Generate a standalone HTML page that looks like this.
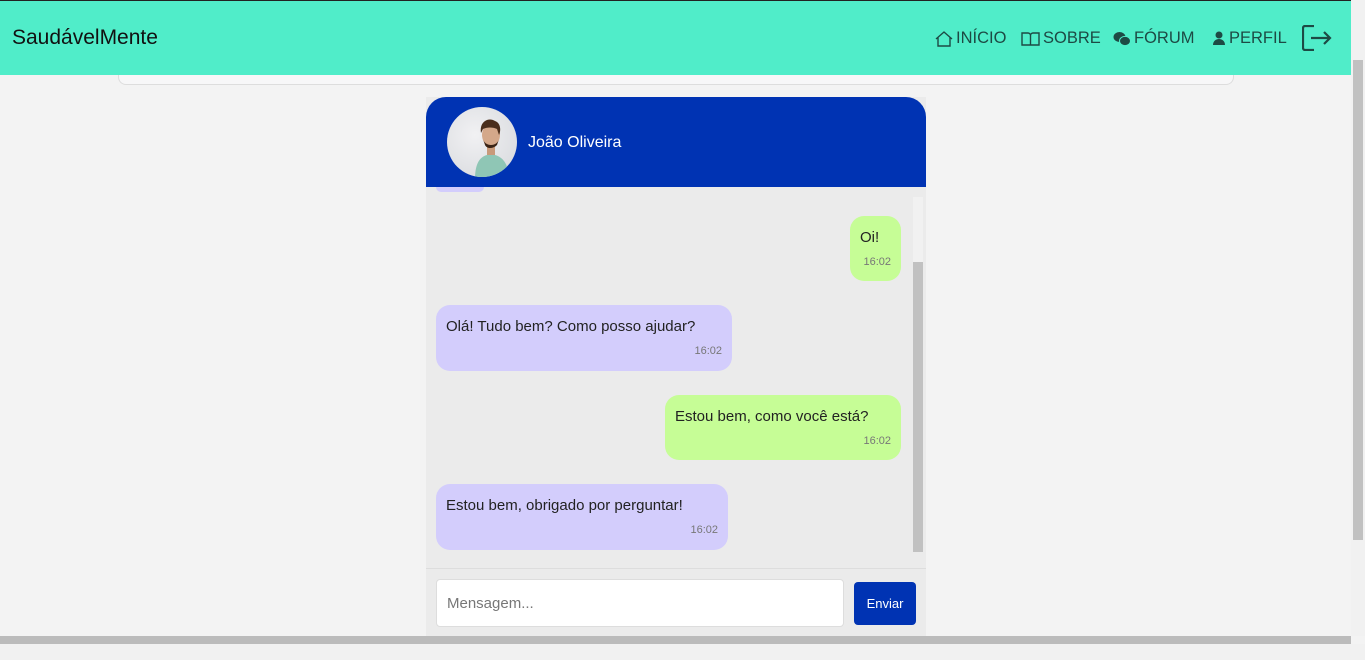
<!DOCTYPE html>
<html><head><meta charset="utf-8"><style>
*{box-sizing:border-box;margin:0;padding:0}
body{width:1365px;height:660px;overflow:hidden;background:#f3f3f3;font-family:"Liberation Sans","DejaVu Sans",sans-serif;position:relative}
.card{position:absolute;left:118px;top:60px;width:1116px;height:25px;background:#f7f7f8;border:1px solid #ddd;border-top:none;border-radius:0 0 8px 8px}
.top{position:absolute;left:0;top:0;width:1351px;height:75px;background:#50edc9;border-top:1px solid #222}
.logo{position:absolute;left:12px;top:25px;font-size:21px;color:#111}
.nav{position:absolute;top:28px;font-size:16.5px;color:#1d4a44;display:flex;align-items:center;gap:3px}
.nav svg{display:block}
.vs{position:absolute;right:0;top:0;width:14px;height:636px;background:#f1f1f1}
.vs div{position:absolute;left:2px;top:60px;width:10px;height:480px;background:#c1c1c1}
.hs{position:absolute;left:0;top:636px;width:1351px;height:8px;background:#bbb}
.hs2{position:absolute;left:0;top:644px;width:1365px;height:16px;background:#f1f1f1}
.chat{position:absolute;left:426px;top:97px;width:500px;height:539px;background:#ebebeb}
.head{height:90px;background:#0033b3;border-radius:20px 20px 0 0;position:relative}
.av{position:absolute;left:21px;top:10px;width:70px;height:70px;border-radius:50%;overflow:hidden;background:radial-gradient(circle at 40% 40%,#f1f1f3,#d6d8dc)}
.name{position:absolute;left:102px;top:37px;color:#fff;font-size:16px}
.msg{position:absolute;border-radius:14px;padding:13px 10px 0;font-size:15px;color:#222}
.msg small{display:block;text-align:right;font-size:11px;color:#777;margin-top:10px}
.me{background:#c6fd96}.them{background:#d3cdfc}
.sb{position:absolute;left:487px;top:100px;width:10px;height:355px;background:#f1f1f1}
.sb div{position:absolute;top:65px;left:0;width:10px;height:290px;background:#c1c1c1}
.foot{position:absolute;left:0;top:471px;width:500px;height:68px;border-top:1px solid #ddd}
.inp{position:absolute;left:10px;top:10px;width:408px;height:48px;background:#fff;border:1px solid #ddd;border-radius:4px;padding:15px 10px;color:#777;font-size:15px}
.btn{position:absolute;left:428px;top:13px;width:62px;height:43px;background:#0033b3;border-radius:4px;color:#fff;font-size:13px;text-align:center;line-height:43px}
</style></head><body>
<div class="card"></div>
<div class="top">
<div class="logo">SaudávelMente</div>
<div class="nav" style="left:935px"><svg width="18" height="16" viewBox="0 0 18 16" fill="none" stroke="#1d4a44" stroke-width="1.4"><path d="M1 8L9 1l8 7M3 6v9h12V6"/></svg>INÍCIO</div>
<div class="nav" style="left:1021px"><svg width="19" height="15" viewBox="0 0 19 15" fill="none" stroke="#1d4a44" stroke-width="1.4"><path d="M1 2h6a2.5 2.5 0 012.5 2.5V14H1zM18 2h-6a2.5 2.5 0 00-2.5 2.5V14H18z"/></svg>SOBRE</div>
<div class="nav" style="left:1113px"><svg width="18" height="16" viewBox="0 0 18 16" fill="#1d4a44"><ellipse cx="6.5" cy="6" rx="6" ry="5"/><ellipse cx="12" cy="10" rx="5.5" ry="4.6" stroke="#50edc9" stroke-width="1"/></svg>FÓRUM</div>
<div class="nav" style="left:1212px"><svg width="14" height="15" viewBox="0 0 14 15" fill="#1d4a44"><circle cx="7" cy="4" r="3.5"/><path d="M1 14c0-4 3-6 6-6s6 2 6 6z"/></svg> PERFIL</div>
<svg style="position:absolute;left:1302px;top:24px" width="30" height="26" viewBox="0 0 30 26" fill="none" stroke="#1d4a44" stroke-width="2.2"><path d="M12 1H3a2 2 0 00-2 2v20a2 2 0 002 2h9M9 13h19M22 7l6 6-6 6"/></svg>
</div>
<div class="chat">
<div class="head"><div class="av"><svg width="70" height="70" viewBox="0 0 70 70"><path d="M28 72c0-14 4-22 12-24h8c8 2 14 10 14 24z" fill="#8fc6b5"/><rect x="40" y="36" width="8" height="12" fill="#c89a7a"/><ellipse cx="44" cy="28" rx="9" ry="11" fill="#d4a88a"/><path d="M34 26c-2-12 8-16 14-12 6 2 6 10 4 14l-2-6c-4-2-10-2-14 0z" fill="#4a2e1c"/><path d="M36 32c2 8 14 8 16 0l-2 6c-4 4-10 4-12 0z" fill="#3a2416"/></svg></div><div class="name">João Oliveira</div></div>
<div style="position:absolute;left:10px;top:90px;width:48px;height:5px;background:#d3cdfc;border-radius:0 0 10px 10px"></div>
<div class="msg me" style="left:424px;top:119px;width:51px;height:65px">Oi!<small>16:02</small></div>
<div class="msg them" style="left:10px;top:208px;width:296px;height:66px">Olá! Tudo bem? Como posso ajudar?<small>16:02</small></div>
<div class="msg me" style="left:239px;top:298px;width:236px;height:65px">Estou bem, como você está?<small>16:02</small></div>
<div class="msg them" style="left:10px;top:387px;width:292px;height:66px">Estou bem, obrigado por perguntar!<small>16:02</small></div>
<div class="sb"><div></div></div>
<div class="foot"><div class="inp">Mensagem...</div><div class="btn">Enviar</div></div>
</div>
<div class="vs"><div></div></div>
<div class="hs"></div><div class="hs2"></div>
</body></html>
